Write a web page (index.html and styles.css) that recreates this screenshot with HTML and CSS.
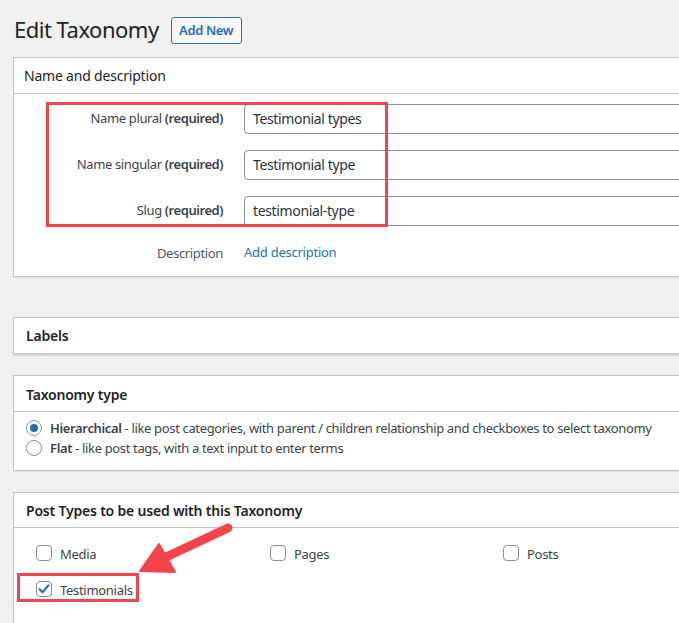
FILE: index.html
```html
<!DOCTYPE html>
<html>
<head>
<meta charset="utf-8">
<link rel="stylesheet" href="styles.css">
</head>
<body>
<div class="page">
  <div class="title-row">
    <h1 class="title">Edit Taxonomy</h1>
    <a class="btn-add">Add New</a>
  </div>

  <div class="panel panel-name">
    <div class="panel-head plain">Name and description</div>
    <div class="form-grid">
      <div class="f-label">Name plural <b>(required)</b></div>
      <div class="f-input">Testimonial types</div>
      <div class="f-label">Name singular <b>(required)</b></div>
      <div class="f-input">Testimonial type</div>
      <div class="f-label">Slug <b>(required)</b></div>
      <div class="f-input">testimonial-type</div>
      <div class="f-label desc">Description</div>
      <div class="f-link">Add description</div>
    </div>
  </div>

  <div class="panel panel-labels">
    <div class="panel-head strong only">Labels</div>
  </div>

  <div class="panel panel-type">
    <div class="panel-head strong">Taxonomy type</div>
    <div class="radio-list">
      <div class="radio-row"><span class="radio checked"></span><span><b class="opt">Hierarchical</b> - like post categories, with parent / children relationship and checkboxes to select taxonomy</span></div>
      <div class="radio-row"><span class="radio"></span><span><b class="opt">Flat</b> - like post tags, with a text input to enter terms</span></div>
    </div>
  </div>

  <div class="panel panel-posts">
    <div class="panel-head strong">Post Types to be used with this Taxonomy</div>
    <div class="check-grid">
      <div class="check-item"><span class="checkbox"></span><span>Media</span></div>
      <div class="check-item"><span class="checkbox"></span><span>Pages</span></div>
      <div class="check-item"><span class="checkbox"></span><span>Posts</span></div>
      <div class="check-item"><span class="checkbox checked"><svg viewBox="0 0 16 16" width="16" height="16"><path d="M3.6 8.2 L6.6 11.2 L12.4 4.4" fill="none" stroke="#2271b1" stroke-width="2.2" stroke-linecap="round" stroke-linejoin="round"/></svg></span><span>Testimonials</span></div>
    </div>
  </div>

  <div class="mark mark-fields"></div>
  <div class="mark mark-testi"></div>
  <svg class="arrow" width="679" height="623" viewBox="0 0 679 623">
    <line x1="228" y1="528" x2="164" y2="558" stroke="#f2444a" stroke-width="9" stroke-linecap="round"/>
    <polygon points="140,571 159,544 175,572" fill="#f2444a" stroke="#f2444a" stroke-width="2" stroke-linejoin="round"/>
  </svg>
</div>
</body>
</html>
```

FILE: styles.css
```css
html, body {
  margin: 0;
  padding: 0;
}
body {
  background: #f0f0f1;
  font-family: "Noto Sans", "Open Sans", sans-serif;
  font-size: 13px;
  color: #3c434a;
  overflow: hidden;
  width: 679px;
  height: 623px;
}
.page {
  position: relative;
  width: 679px;
  height: 623px;
  padding-left: 13px;
  box-sizing: border-box;
}
.title-row {
  display: flex;
  align-items: center;
  gap: 12px;
  padding-top: 14px;
  height: 30px;
}
.title {
  margin: 0 0 0 1px;
  font-size: 22px;
  font-weight: 400;
  color: #1d2327;
  line-height: 30px;
  letter-spacing: -0.5px;
}
.btn-add {
  display: inline-block;
  box-sizing: border-box;
  height: 27px;
  width: 71px;
  text-align: center;
  line-height: 25px;
  border: 1px solid #2271b1;
  border-radius: 3px;
  background: #f6f7f7;
  color: #2271b1;
  font-size: 13px;
  font-weight: 600;
  letter-spacing: -0.4px;
  margin-top: 2px;
}
.panel {
  width: 720px;
  background: #fff;
  border: 1px solid #c3c4c7;
  box-sizing: border-box;
  box-shadow: 0 1px 1px rgba(0,0,0,0.06);
}
.panel-name { margin-top: 13px; }
.panel-labels { margin-top: 40px; box-shadow: 0 2px 1px rgba(0,0,0,0.1); }
.panel-type { margin-top: 21px; }
.panel-posts { margin-top: 21px; height: 160px; }
.panel-head {
  border-bottom: 1px solid #c3c4c7;
  line-height: 20px;
  font-size: 14px;
  color: #1d2327;
  padding: 8px 12px 7px;
  letter-spacing: -0.2px;
}
.panel-head.plain { padding-left: 10px; }
.panel-head.strong { font-weight: 600; }
.panel-head.only { border-bottom: none; padding: 8px 12px 7px; }
.panel-type .panel-head { padding-top: 9px; padding-bottom: 6px; }
.panel-posts .panel-head { padding-top: 8px; padding-bottom: 6px; }

.form-grid {
  display: grid;
  grid-template-columns: 199px 1fr;
  column-gap: 21px;
  row-gap: 16px;
  padding: 10px 0 12px 10px;
  align-items: center;
}
.f-label {
  text-align: right;
  color: #3c434a;
  padding-bottom: 3px;
  letter-spacing: -0.35px;
}
.f-label b { font-weight: 600; letter-spacing: -0.45px; }
.f-label.desc { color: #50575e; padding-bottom: 0; line-height: 22px; }
.f-input {
  height: 30px;
  box-sizing: border-box;
  border: 1px solid #8c8f94;
  border-radius: 4px;
  padding: 0 8px;
  line-height: 28px;
  font-size: 14px;
  color: #2c3338;
  width: 460px;
  letter-spacing: -0.35px;
}
.f-link {
  color: #2271b1;
  line-height: 22px;
  letter-spacing: -0.25px;
  margin-top: -2px;
}

.radio-list {
  padding: 6px 12px 12px;
}
.radio-row {
  display: flex;
  align-items: center;
  gap: 8px;
  line-height: 20px;
  height: 20px;
  letter-spacing: -0.35px;
  white-space: nowrap;
}
.opt { font-weight: 600; }
.radio {
  width: 16px;
  height: 16px;
  box-sizing: border-box;
  border: 1px solid #8c8f94;
  border-radius: 50%;
  flex: none;
  display: flex;
  align-items: center;
  justify-content: center;
  background: #fff;
}
.radio.checked::after {
  content: "";
  width: 8px;
  height: 8px;
  border-radius: 50%;
  background: #2271b1;
}

.check-grid {
  display: grid;
  grid-template-columns: 234px 233px 200px;
  grid-auto-rows: 36px;
  padding: 8px 0 0 22px;
}
.check-item {
  display: flex;
  align-items: center;
  gap: 8px;
  color: #3c434a;
  letter-spacing: -0.3px;
}
.checkbox {
  width: 16px;
  height: 16px;
  box-sizing: border-box;
  border: 1px solid #8c8f94;
  border-radius: 4px;
  flex: none;
  position: relative;
  margin-top: -3px;
}
.checkbox svg {
  position: absolute;
  left: -1px;
  top: -1px;
}

.mark {
  position: absolute;
  border: 3px solid #f2444a;
  box-sizing: border-box;
}
.mark-fields {
  left: 46px;
  top: 102px;
  width: 342px;
  height: 125px;
}
.mark-testi {
  left: 17px;
  top: 573px;
  width: 122px;
  height: 29px;
}
.arrow {
  position: absolute;
  left: 0;
  top: 0;
  pointer-events: none;
}
```
